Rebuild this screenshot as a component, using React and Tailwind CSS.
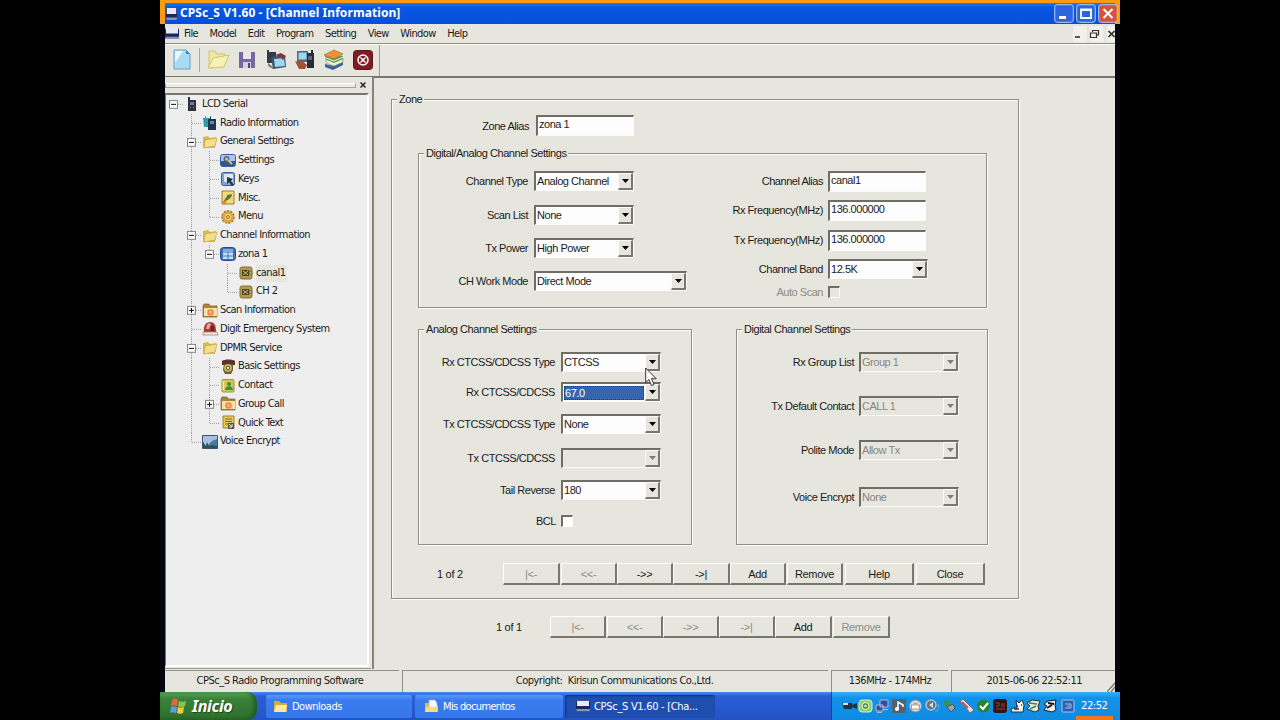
import clsx from "clsx";

const UI = "font-['DejaVu_Sans_Condensed','Noto_Sans',sans-serif]";

// cells: one letter per guide column. I = line, T = branch, L = last branch, _ = empty
const TREE = [
  { cells: "E", box: "-", icon: "radio", label: "LCD Serial" },
  { cells: "_T", icon: "radios", label: "Radio Information" },
  { cells: "_T", box: "-", icon: "folder", label: "General Settings" },
  { cells: "_IT", icon: "settings", label: "Settings" },
  { cells: "_IT", icon: "keys", label: "Keys" },
  { cells: "_IT", icon: "misc", label: "Misc." },
  { cells: "_IL", icon: "menu", label: "Menu" },
  { cells: "_T", box: "-", icon: "folder", label: "Channel Information" },
  { cells: "_IL", box: "-", icon: "zone", label: "zona 1" },
  { cells: "_I_T", icon: "channel", label: "canal1", selected: true },
  { cells: "_I_L", icon: "channel", label: "CH 2" },
  { cells: "_T", box: "+", icon: "scan", label: "Scan Information" },
  { cells: "_T", icon: "alarm", label: "Digit Emergency System" },
  { cells: "_T", box: "-", icon: "folder", label: "DPMR Service" },
  { cells: "_IT", icon: "phone", label: "Basic Settings" },
  { cells: "_IT", icon: "contact", label: "Contact" },
  { cells: "_IT", box: "+", icon: "scan", label: "Group Call" },
  { cells: "_IL", icon: "note", label: "Quick Text" },
  { cells: "_L", icon: "voice", label: "Voice Encrypt" },
];

function GuideCell({ kind, box }) {
  return (
    <svg className="h-full w-[18px] shrink-0 overflow-visible" viewBox="0 0 18 19" preserveAspectRatio="none" shapeRendering="crispEdges">
      <g stroke="#9a9a9a" strokeDasharray="1 1">
        {(kind === "I" || kind === "T") && <path d="M8.500 0V19" />}
        {kind === "L" && <path d="M8.500 0V10" />}
        {(kind === "T" || kind === "L" || kind === "E") && <path d="M9 9.500H18" />}
      </g>
      {box && (
        <>
          <rect x="4.500" y="5.500" width="8" height="8" fill="#fafafa" stroke="#858585" />
          <path d={box === "+" ? "M6 9.500H11M8.500 7V12" : "M6 9.500H11"} stroke="#111" />
        </>
      )}
    </svg>
  );
}

function TreeIcon({ name }) {
  return (
    <svg className="h-4 w-[18px] shrink-0" viewBox="0 0 18 16">
      {name === "radio" && (
        <>
          <path d="M5 1h2v3h6v11H5z" fill="#30313f" />
          <path d="M7 6h4v3H7z" fill="#7476a3" />
          <path d="M7 11h1v1H7zm3 0h1v1h-1z" fill="#8a8ba0" />
        </>
      )}
      {name === "radios" && (
        <>
          <path d="M2 3h2V1h1v2h4V1h1v11H3z" fill="#2b9fb0" />
          <path d="M7 4h2V2h1v2h5v11H7z" fill="#263447" />
          <path d="M9 6h4v3H9z" fill="#4a95bd" />
        </>
      )}
      {name === "folder" && (
        <>
          <path d="M2 3l5-1 2 2 6-1v3l-1 8H2z" fill="#d9b94d" />
          <path d="M4 6l12-2-2 8-11 2z" fill="#f5e08a" stroke="#c9a545" strokeWidth=".7" />
        </>
      )}
      {name === "settings" && (
        <>
          <rect x="1.500" y="1.500" width="15" height="12" rx="2" fill="#a8c6ec" stroke="#3561a4" />
          <path d="M2 8h14v5H2z" fill="#35558f" />
          <circle cx="7.500" cy="6" r="2.200" fill="none" stroke="#69635d" strokeWidth="1.500" />
          <path d="M9 7l4 4" stroke="#cfbe8d" strokeWidth="2" />
        </>
      )}
      {name === "keys" && (
        <>
          <rect x="2.500" y="1.500" width="13" height="13" rx="2" fill="#7fa2d1" stroke="#3b5f99" />
          <rect x="5" y="3" width="9" height="8" rx="1" fill="#dde7f2" />
          <path d="M8 6l6 2-2 2 3 4-2 1-3-4-2 2z" fill="#25344d" />
        </>
      )}
      {name === "misc" && (
        <>
          <path d="M3 1h12v13H3z" fill="#f3db7b" stroke="#a57a2a" />
          <path d="M5 13c0-5 3-5 3-8l5-1c0 4-3 5-6 7z" fill="#597c35" />
          <path d="M3 11h4v3H3z" fill="#d98b34" />
        </>
      )}
      {name === "menu" && (
        <>
          <circle cx="9" cy="8" r="6" fill="#e2b449" stroke="#b98432" strokeWidth="1.800" strokeDasharray="2.300 1" />
          <circle cx="9" cy="8" r="4" fill="#f7d87b" stroke="#c99a3c" />
          <circle cx="9" cy="8" r="1.500" fill="#f7e3a4" stroke="#966221" />
        </>
      )}
      {name === "zone" && (
        <>
          <rect x="1.500" y="1.500" width="15" height="13" rx="3" fill="#3d71bc" stroke="#264c8c" />
          <path d="M4 3h10v3H4z" fill="#82aae1" />
          <path d="M4 6.500h4.500v3H4zM9.500 6.500H14v3H9.500zM4 10.500h4.500V13H4zM9.500 10.500H14V13H9.500z" fill="#cbe1f7" />
        </>
      )}
      {name === "channel" && (
        <>
          <rect x="3" y="2" width="12" height="12" rx="2" fill="#b39a4c" stroke="#85702f" />
          <path d="M5 5h7v6H5z" fill="#47462b" />
          <path d="M6 6l5 4M11 6l-5 4" stroke="#d3c278" />
          <circle cx="13.500" cy="8" r="1.500" fill="#d9be69" stroke="#4d4430" strokeWidth=".7" />
        </>
      )}
      {name === "scan" && (
        <>
          <path d="M2 3l1-2h5l1 2h7v11H2z" fill="#a8843d" stroke="#776027" strokeWidth=".7" />
          <path d="M3 5h13v8H3z" fill="#f8dfab" />
          <circle cx="9.500" cy="9.500" r="3.200" fill="#ed843b" />
          <circle cx="9.500" cy="9.500" r="1.200" fill="none" stroke="#fbe0ad" />
        </>
      )}
      {name === "alarm" && (
        <>
          <path d="M3 11C2 5 5 1 9 1c5 0 6 4 6 10z" fill="#a83835" />
          <path d="M6 4c1-2 3-2 4-1L8 8H5z" fill="#e6a9a4" />
          <path d="M10 5h3v5h-3z" fill="#582d30" />
          <path d="M2 11h14l1 3H2z" fill="#eee7df" stroke="#b96b65" strokeWidth=".7" />
        </>
      )}
      {name === "phone" && (
        <>
          <path d="M3 2c2-2 11-2 13 0v4h-4l-1-1H7L6 6H3z" fill="#5c332d" />
          <path d="M5 5h9v6l-2 4H6l-2-4z" fill="#6b5f33" />
          <circle cx="9" cy="9" r="3.800" fill="#e0c45d" />
          <circle cx="9" cy="9" r="1.800" fill="#fff4c9" stroke="#4d4125" />
        </>
      )}
      {name === "contact" && (
        <>
          <rect x="3" y="1.500" width="12" height="12.500" rx="1" fill="#d3c456" stroke="#a1943b" />
          <circle cx="10" cy="6" r="2" fill="#418c30" />
          <path d="M6 12c0-5 8-5 8 0z" fill="#418c30" />
          <path d="M4.500 3v9" stroke="#f3edaa" strokeWidth="1.500" />
        </>
      )}
      {name === "note" && (
        <>
          <path d="M4 1h11v12H4z" fill="#e4c959" stroke="#9f8431" />
          <path d="M6 4h7M6 6.500h7M6 9h3" stroke="#7a682b" />
          <path d="M9 8h6v6H9z" fill="#555044" />
          <path d="M10 9l3 3m0-3v3h-3" stroke="#fff" />
        </>
      )}
      {name === "voice" && (
        <>
          <path d="M1.500 1.500h15v13h-15z" fill="#a9c1de" stroke="#3c5577" />
          <path d="M8 10l3-3 5-2v9H6z" fill="#4a78a8" />
          <path d="M2 8l3 4 1-4 2 4 3-1 5 1v2H2z" fill="#2d5550" />
        </>
      )}
    </svg>
  );
}

function TreeRow({ cells, box, icon, label, selected }) {
  const last = cells.length - 1;
  return (
    <div className="flex h-[18.75px] items-center">
      {cells.split("").map((c, i) => (
        <GuideCell key={i} kind={c} box={i === last ? box : null} />
      ))}
      <TreeIcon name={icon} />
      <span className={clsx("ml-px h-[17px] pr-[2px] leading-[16px] tracking-[-0.58px] whitespace-nowrap", selected && "bg-[#e6e6de]")}>{label}</span>
    </div>
  );
}

function AppIcon({ className }) {
  return (
    <svg className={className} viewBox="0 0 14 14" preserveAspectRatio="none">
      <rect x="0" y="1" width="14" height="12" rx="2" fill="#1c2658" />
      <path d="M1 1h12v6H1z" fill="#e8e9f2" />
      <path d="M0 10.500h14v1.500l-1 1H1z" fill="#8792bd" />
    </svg>
  );
}

function TitleBar() {
  return (
    <div className="flex h-[21px] items-center bg-linear-to-b from-[#2a77f0] via-[#0857e6] via-20% to-[#064fd8]">
      <AppIcon className="ml-px h-3.5 w-[11px]" />
      <span className="ml-[3px] pb-px font-['Noto_Sans',sans-serif] text-[12px] leading-none font-bold tracking-[0.08px] whitespace-nowrap text-white">
        CPSc_S V1.60 - [Channel Information]
      </span>
      <div className="mr-[-3px] ml-auto flex gap-[2px]">
        {["min", "max", "close"].map((b) => (
          <svg key={b} className="h-[19px] w-5" viewBox="0 0 20 19">
            <rect x=".7" y=".7" width="18.600" height="17.600" rx="2.500" fill={b === "close" ? "#d6533a" : "#2b67dc"} stroke="#b9cdf5" />
            {b === "min" && <path d="M5 13.500h7" stroke="#fff" strokeWidth="3" />}
            {b === "max" && <path d="M5 5.500h10V14H5zM5 6h10" fill="none" stroke="#fff" strokeWidth="1.800" />}
            {b === "close" && <path d="M5.500 5l9 9m0-9l-9 9" stroke="#fff" strokeWidth="2" />}
          </svg>
        ))}
      </div>
    </div>
  );
}

function MenuBar() {
  return (
    <div className="flex h-[20px] items-center border-b border-[#8f8f86] leading-none">
      <AppIcon className="h-[13px] w-3.5" />
      <div className="ml-[5px] flex gap-[11.600px] pb-px tracking-[-0.62px] whitespace-nowrap">
        {["File", "Model", "Edit", "Program", "Setting", "View", "Window", "Help"].map((m) => (
          <span key={m}>{m}</span>
        ))}
      </div>
      <svg className="ml-auto h-4 w-[42px]" viewBox="0 0 42 16">
        <path d="M0 0h13.500v16H0zM17 0h13.500v16H17zM34 0h8v16h-8z" fill="#f1f0ea" />
        <path d="M2 11h5" stroke="#333" strokeWidth="1.600" />
        <path d="M19.500 6V4.500h6V9H24M17.500 7h6v4.500h-6z" fill="none" stroke="#333" strokeWidth="1.200" />
        <path d="M35.500 5l6 6m0-6l-6 6" stroke="#333" strokeWidth="1.700" />
      </svg>
    </div>
  );
}

function Toolbar() {
  return (
    <div className="flex h-[33px] items-center border-b border-[#77776f] shadow-[inset_0_1px_#fff]">
      <div className="flex h-[31px] w-[215px] items-center border-r border-[#9c9c93]">
        <svg className="ml-[8px] h-6 w-[18px]" viewBox="0 0 18 24">
          <path d="M1 2h12l4 4v15H1z" fill="#a9dbf4" stroke="#6aa0c4" />
          <path d="M2 3h8L2 15z" fill="#e8f8fe" />
          <path d="M13 2v4h4z" fill="#3d8fc4" />
        </svg>
        <div className="ml-[8px] h-6 w-px bg-[#aaaaa0]" />
        <svg className="ml-[7px] h-6 w-[23px]" viewBox="0 0 23 24">
          <path d="M2 3h6l2 3h8v5L6 20H2z" fill="#eee7a5" stroke="#cec579" />
          <path d="M1 20L6 10l16-3-5 12z" fill="#f7f1b5" stroke="#cfc36f" />
        </svg>
        <svg className="ml-[8px] h-5 w-[18px]" viewBox="0 0 18 20">
          <path d="M1 2h16v16H1z" fill="#75699f" />
          <path d="M5 2h8v7H5z" fill="#e8e6ef" />
          <path d="M5 12h8v6H5z" fill="#d3d0df" />
          <path d="M10 13h2v5h-2z" fill="#514679" />
        </svg>
        <svg className="ml-[10px] h-[22px] w-[21px]" viewBox="0 0 21 22">
          <path d="M1 1h2v2h7v11H1z" fill="#34394b" />
          <path d="M5 8l14-2 1 12-13 2z" fill="#3f556c" />
          <path d="M8 10l10-1 1 8-10 1z" fill="#9bd7ed" />
          <path d="M9 6l6-2 5 3-3 4-3-3z" fill="#7b3a35" />
          <path d="M2 14l5 4v2l-5-3z" fill="#777f84" />
        </svg>
        <svg className="ml-[7px] h-[22px] w-[21px]" viewBox="0 0 21 22">
          <path d="M3 2h11v11H3z" fill="#51697e" />
          <path d="M4.500 3.500h8v7h-8z" fill="#9bd7ed" />
          <path d="M13 4h4V1h2v3h1v15h-7z" fill="#282c39" />
          <path d="M14 7h4v4h-4z" fill="#59667d" />
          <path d="M1 12l4 1 2-2 6 5-2 4H5z" fill="#a64f38" />
        </svg>
        <svg className="ml-[8px] h-[22px] w-[22px]" viewBox="0 0 22 22">
          <path d="M2 15v3l8 3 10-5v-3l-9 4z" fill="#37639a" />
          <path d="M3 11v3l8 3 9-4v-3z" fill="#f5edd1" stroke="#8a8d6c" strokeWidth=".7" />
          <path d="M2 7v3l9 4 9-4V7z" fill="#50a05a" />
          <path d="M2 8.500l9 3.500 9-4" fill="none" stroke="#f4f4e4" />
          <path d="M1 6l10-5 9 4-9 5z" fill="#e9933a" stroke="#b96b24" strokeWidth=".7" />
        </svg>
        <svg className="ml-[8px] h-[20px] w-[20px]" viewBox="0 0 20 20">
          <rect x=".5" y=".5" width="19" height="19" rx="3" fill="#811b21" stroke="#5a1519" />
          <circle cx="10" cy="10" r="5" fill="none" stroke="#fff" strokeWidth="1.500" />
          <path d="M7.500 7.500l5 5m0-5l-5 5" stroke="#fff" strokeWidth="1.500" />
        </svg>
      </div>
    </div>
  );
}

function Sidebar() {
  return (
    <aside className="flex w-[209px] shrink-0 flex-col border-r-2 border-[#85857c]">
      <div className="flex h-4 items-center">
        <div className="mt-px h-[5px] w-[191px] border border-[#a0a097] border-t-white bg-[#eeeee8]" />
        <svg className="ml-[4px] h-1.5 w-1.5" viewBox="0 0 6 6">
          <path d="M.5 .5l5 5m0-5l-5 5" stroke="#222" strokeWidth="1.500" />
        </svg>
      </div>
      <div className="h-[574px] w-[204px] border-t-2 border-r-2 border-b-2 border-l border-t-[#77776f] border-r-white border-b-white border-l-[#77776f] bg-[#eeeeee]">
        <div className="-ml-px">
          {TREE.map((n, i) => (
            <TreeRow key={i} {...n} />
          ))}
        </div>
      </div>
      <div className="mt-px h-px w-[206px] bg-[#99998f]" />
    </aside>
  );
}

function Group({ title, className, children }) {
  return (
    <section className={clsx("relative border border-[#8f8f87] shadow-[1px_1px_#fbfbf7,inset_1px_1px_#fbfbf7]", className)}>
      <span className="absolute -top-[8px] left-[5px] bg-[#e6e6de] px-[2px] leading-[14px] whitespace-nowrap">{title}</span>
      {children}
    </section>
  );
}

const SUNKEN = "border-t-2 border-l-2 border-r border-b border-t-[#6e6e67] border-l-[#6e6e67] border-r-[#fbfbf7] border-b-[#fbfbf7]";

function Select({ value, disabled, active, wide }) {
  return (
    <div className={clsx("flex h-[20px] items-center", SUNKEN, wide ? "w-[153px]" : "w-[100px]", disabled ? "bg-[#e6e6de] text-[#86867e]" : "bg-[#fdfdfd]")}>
      <span
        className={clsx(
          "flex-1 overflow-hidden whitespace-nowrap",
          active ? "m-px h-[14px] border border-dotted border-[#1c3c74] bg-[#3565ad] leading-[12px] text-white" : "pl-px leading-[15px]"
        )}
      >
        {value}
      </span>
      <div className="flex h-full w-[15px] items-center justify-center border-t border-r-2 border-b-2 border-l border-t-[#fbfbf7] border-r-[#77776f] border-b-[#77776f] border-l-[#fbfbf7] bg-[#e6e6de]">
        <svg className="h-1 w-[7px]" viewBox="0 0 7 4">
          <path d="M0 0h7L3.500 4z" fill={disabled ? "#7c7c74" : "#000"} />
        </svg>
      </div>
    </div>
  );
}

function Input({ value, className }) {
  return <div className={clsx("h-[21px] w-[98px] pl-px leading-[15px]", SUNKEN, "bg-[#fdfdfd]", className)}>{value}</div>;
}

function Check({ disabled }) {
  return <div className={clsx("h-3 w-3", SUNKEN, disabled ? "bg-[#e6e6de]" : "bg-[#fdfdfd]")} />;
}

function Field({ label, labelWidth, className, muted, children }) {
  return (
    <div className={clsx("flex h-5 items-center", className)}>
      <span className={clsx("shrink-0 text-right whitespace-nowrap", labelWidth, muted && "text-[#8c8c84]")}>{label}</span>
      {children}
    </div>
  );
}

function Button({ children, disabled, className }) {
  return (
    <button
      className={clsx(
        "flex h-[22px] items-center justify-center border-t border-r-2 border-b-2 border-l border-t-[#fdfdfa] border-r-[#77776f] border-b-[#77776f] border-l-[#fdfdfa] whitespace-pre",
        disabled && "text-[#8c8c84]",
        className
      )}
    >
      {children}
    </button>
  );
}

function ChannelForm() {
  return (
    <main className="flex-1 border-t border-[#77776f] pt-[21px] pl-[17px] font-['Liberation_Sans',Arial,sans-serif] text-[11px] leading-[14px] tracking-[-0.46px] text-[#1b1b1b]">
      <Group title="Zone" className="h-[500px] w-[628px] pt-[15px]">
        <Field label="Zone Alias" labelWidth="w-[137px]" className="h-[21px]">
          <Input value="zona 1" className="ml-[7px]" />
        </Field>

        <Group title="Digital/Analog Channel Settings" className="mt-[17px] ml-[26px] flex h-[155px] w-[569px] pt-[17px]">
          <div className="w-[302px]">
            <Field label="Channel Type" labelWidth="w-[109px] mr-1.5">
              <Select value="Analog Channel" />
            </Field>
            <Field label="Scan List" labelWidth="w-[109px] mr-1.5" className="mt-[14px]">
              <Select value="None" />
            </Field>
            <Field label="Tx Power" labelWidth="w-[109px] mr-1.5" className="mt-[13px]">
              <Select value="High Power" />
            </Field>
            <Field label="CH Work Mode" labelWidth="w-[109px] mr-1.5" className="mt-[13px]">
              <Select value="Direct Mode" wide />
            </Field>
          </div>
          <div>
            <Field label="Channel Alias" labelWidth="w-[102px] mr-[5px]">
              <Input value="canal1" />
            </Field>
            <Field label="Rx Frequency(MHz)" labelWidth="w-[102px] mr-[5px]" className="mt-[9px]">
              <Input value="136.000000" />
            </Field>
            <Field label="Tx Frequency(MHz)" labelWidth="w-[102px] mr-[5px]" className="mt-[10px]">
              <Input value="136.000000" />
            </Field>
            <Field label="Channel Band" labelWidth="w-[102px] mr-[5px]" className="mt-[9px]">
              <Select value="12.5K" />
            </Field>
            <Field label="Auto Scan" labelWidth="w-[102px] mr-[5px]" className="mt-[3px]" muted>
              <Check disabled />
            </Field>
          </div>
        </Group>

        <div className="mt-[21px] ml-[26px] flex gap-[44px]">
          <Group title="Analog Channel Settings" className="h-[216px] w-[274px] pt-[22px]">
            <Field label="Rx CTCSS/CDCSS Type" labelWidth="w-[136px] mr-1.5">
              <Select value="CTCSS" />
            </Field>
            <Field label="Rx CTCSS/CDCSS" labelWidth="w-[136px] mr-1.5" className="mt-[10px]">
              <Select value="67.0" active />
            </Field>
            <Field label="Tx CTCSS/CDCSS Type" labelWidth="w-[136px] mr-1.5" className="mt-[12px]">
              <Select value="None" />
            </Field>
            <Field label="Tx CTCSS/CDCSS" labelWidth="w-[136px] mr-1.5" className="mt-[14px]">
              <Select value="" disabled />
            </Field>
            <Field label="Tail Reverse" labelWidth="w-[136px] mr-1.5" className="mt-[12px]">
              <Select value="180" />
            </Field>
            <Field label="BCL" labelWidth="w-[137px] mr-[5px]" className="mt-[11px]">
              <Check />
            </Field>
          </Group>

          <Group title="Digital Channel Settings" className="h-[216px] w-[252px] pt-[22px]">
            <Field label="Rx Group List" labelWidth="w-[117px] mr-[5px]">
              <Select value="Group 1" disabled />
            </Field>
            <Field label="Tx Default Contact" labelWidth="w-[117px] mr-[5px]" className="mt-[24px]">
              <Select value="CALL 1" disabled />
            </Field>
            <Field label="Polite Mode" labelWidth="w-[117px] mr-[5px]" className="mt-[24px]">
              <Select value="Allow Tx" disabled />
            </Field>
            <Field label="Voice Encrypt" labelWidth="w-[117px] mr-[5px]" className="mt-[27px]">
              <Select value="None" disabled />
            </Field>
          </Group>
        </div>

        <div className="mt-[18px] ml-[45px] flex items-center tracking-[-0.3px]">
          <span className="w-[66px]">1 of 2</span>
          <Button disabled className="w-[57px]">{"|<-"}</Button>
          <Button disabled className="ml-px w-[56px]">{"<<-"}</Button>
          <Button className="w-[56px]">{"->>"}</Button>
          <Button className="w-[57px]">{"->|"}</Button>
          <Button className="w-[56px]">Add</Button>
          <Button className="ml-px w-[56px]">Remove</Button>
          <Button className="ml-[2px] w-[69px]">Help</Button>
          <Button className="ml-[2px] w-[69px]">Close</Button>
        </div>
      </Group>

      <div className="mt-[17px] ml-[105px] flex items-center tracking-[-0.3px]">
        <span className="w-[54px]">1 of 1</span>
        <Button disabled className="w-[56px]">{"|<-"}</Button>
        <Button disabled className="ml-px w-[56px]">{"<<-"}</Button>
        <Button disabled className="w-[56px]">{"->>"}</Button>
        <Button disabled className="w-[56px]">{"->|"}</Button>
        <Button className="w-[57px]">Add</Button>
        <Button disabled className="ml-px w-[57px]">Remove</Button>
      </div>
    </main>
  );
}

function StatusBar() {
  const cell = "flex items-center justify-center border-t border-l border-[#8f8f87] whitespace-pre";
  return (
    <footer className="flex h-[23px] gap-[3px] pt-px">
      <div className={clsx(cell, "w-[234px] border-l-transparent pr-[5px]")}>CPSc_S Radio Programming Software</div>
      <div className={clsx(cell, "w-[426px] pr-[2px]")}>{"Copyright:  Kirisun Communications Co.,Ltd."}</div>
      <div className={clsx(cell, "w-[117px]")}>136MHz - 174MHz</div>
      <div className={clsx(cell, "flex-1")}>
        <span className="ml-auto">2015-06-06 22:52:11</span>
        <svg className="ml-[25px] h-[10px] w-[8px] self-end" viewBox="0 0 8 10">
          <path d="M0 10L8 1M4 10l4-5" stroke="#77776f" strokeWidth="1.300" />
        </svg>
      </div>
    </footer>
  );
}

function TaskButton({ icon, children, active, className }) {
  return (
    <div className={clsx("flex h-[23px] items-center rounded-[2px] leading-none whitespace-nowrap text-white", active ? "bg-[#1e4fae] shadow-[inset_1px_1px_2px_#12367f]" : "bg-linear-to-b from-[#5b9af8] via-[#3b7df0] via-20% to-[#3577ec]", className)}>
      {icon}
      {children}
    </div>
  );
}

function TrayIcons() {
  return (
    <svg className="h-[18px] w-[238px] shrink-0" viewBox="0 0 238 18">
      <path d="M2 6h10v6H4zM12 8l5-2v6l-5-2z" fill="#25323a" />
      <path d="M3 6h5v2H3z" fill="#d9e3e5" />
      <rect x="19" y="3" width="13" height="12" rx="3" fill="#8ece63" stroke="#d9f0cc" />
      <circle cx="25.500" cy="9" r="3.500" fill="#4b9138" stroke="#f4fff0" />
      <circle cx="25.500" cy="9" r="1.200" fill="#f4fff0" />
      <path d="M36 8h7v6h-7zM40 3h8v7h-8z" fill="#345098" stroke="#aeb8d9" />
      <path d="M37 15.500h5M43 12.500h5" fill="none" stroke="#aeb8d9" />
      <rect x="52" y="2" width="14" height="14" fill="#52636b" />
      <path d="M58 12V5l5 3v2" fill="none" stroke="#fff" strokeWidth="1.500" />
      <circle cx="57" cy="12" r="2" fill="#fff" />
      <circle cx="75.500" cy="9" r="6" fill="#d9dcda" stroke="#87939a" />
      <path d="M71.500 8h8v4h-8z" fill="#fff" stroke="#8f7656" strokeWidth=".7" />
      <path d="M73.500 6.500h4" stroke="#bfa274" strokeWidth="1.500" />
      <circle cx="91" cy="8" r="5" fill="#5f7388" stroke="#b4bfc8" strokeWidth="1.500" />
      <path d="M93 5v6l-4-3z" fill="#d9dee0" />
      <path d="M98 7c2 3 1 6-3 8" fill="none" stroke="#79a6cf" />
      <path d="M105 2l5 3 2 4-4 2-4-3z" fill="#3b944b" />
      <path d="M107 10l6-3 2 4-4 4z" fill="#9ea6a8" stroke="#46545a" />
      <path d="M120 4l3-2 11 11-4 3z" fill="#e5dfdf" stroke="#74666c" />
      <path d="M122 5l6 6" stroke="#b55554" strokeWidth="2" />
      <circle cx="143.500" cy="9" r="6.500" fill="#28852f" />
      <path d="M140 9l3 3 5-6" fill="none" stroke="#fff" strokeWidth="2" />
      <rect x="153" y="2" width="14" height="14" rx="3" fill="#2b1718" />
      <path d="M156 6h3v3h-3m6-3v4m2-4v4M156 12h9" fill="none" stroke="#ae3931" />
      <path d="M176 3l3 3 3-3 2 5-1 7h-12l1-4h5z" fill="#f5f5ef" stroke="#272e37" />
      <path d="M177 9h1m3-1h1m-8 4h5" stroke="#272e37" strokeWidth="1.500" />
      <path d="M187 6l5-3 8 1-2 5 1 4-4 2-8-3 3-3z" fill="#e5e9df" stroke="#26332b" />
      <path d="M189 6l8 1M190 12l6-3" stroke="#4f7a5c" strokeWidth="1.500" />
      <path d="M204 7l4-3 8-1-1 5 1 5-4 2-8-2 3-4z" fill="#eef0ec" stroke="#171b20" />
      <path d="M208 6l6 1M207 11l5-3" stroke="#171b20" strokeWidth="2" />
      <rect x="222" y="3" width="12" height="12" rx="1" fill="#345fa8" stroke="#a5c5e9" />
      <path d="M225 7h6v4h-6m2-2h3" fill="none" stroke="#9cc2ef" />
    </svg>
  );
}

function Taskbar() {
  return (
    <div className="flex h-[28px] bg-linear-to-b from-[#4788f4] via-[#2a5ed8] via-15% to-[#2453c4]">
      <div className="flex w-[97px] items-center rounded-r-[10px] bg-linear-to-b from-[#5ca45b] via-[#398238] via-25% to-[#2d702c] pl-[10px] shadow-[inset_-3px_-1px_4px_#205a20]">
        <svg className="h-[17px] w-[17px]" viewBox="0 0 17 17">
          <path d="M2 2c3-2 4-1 6 0L7 8C5 7 3 7 1 8z" fill="#e5673b" />
          <path d="M9 3c3 1 4 1 7 0l-1 5c-3 2-5 1-7 0z" fill="#86c454" />
          <path d="M1 9c2-1 4-1 6 0l-1 6c-2-1-4-1-6 0z" fill="#6699e4" />
          <path d="M8 9c2 1 4 1 6 0l-1 6c-2 1-4 1-6 0z" fill="#f5cb45" />
        </svg>
        <span className="ml-[5px] font-['Noto_Sans',sans-serif] text-[16px] leading-none font-bold tracking-[-0.35px] text-white italic [text-shadow:1px_1px_1px_#1a461a]">
          Inicio
        </span>
      </div>
      <div className="flex items-center gap-[3px] pl-[9px]">
        <TaskButton
          className="w-[146px] pl-[7px]"
          icon={
            <svg className="mr-[4px] h-3.5 w-[15px]" viewBox="0 0 15 14">
              <path d="M1 2h5l2 2h6v9H1z" fill="#d8ac37" />
              <path d="M3 6h11l-1 7H1z" fill="#fbeaa0" />
            </svg>
          }
        >
          Downloads
        </TaskButton>
        <TaskButton
          className="w-[148px] pl-[9px] tracking-[-0.65px]"
          icon={
            <svg className="mr-[4px] h-3.5 w-[15px]" viewBox="0 0 15 14">
              <path d="M1 4h4l1 2h8v7H1z" fill="#e3ba4b" />
              <path d="M5 1h6l2 3v6H5z" fill="#f5f7fa" stroke="#9fb2c8" strokeWidth=".6" />
              <path d="M2 8h12l-1 5H1z" fill="#f8dc83" />
            </svg>
          }
        >
          Mis documentos
        </TaskButton>
        <TaskButton active className="-ml-px w-[150px] pl-[11px] tracking-[-0.3px]" icon={<AppIcon className="mr-[4px] h-3 w-3.5" />}>
          CPSc_S V1.60 - [Cha...
        </TaskButton>
      </div>
      <div className="relative ml-auto flex w-[289px] items-center border-l border-[#0f4aa8] bg-linear-to-b from-[#39b0f8] via-[#1193ea] via-20% to-[#108ae0] pl-[8px] text-white">
        <TrayIcons />
        <span className="ml-[3px] tracking-[-0.4px]">22:52</span>
        <div className="absolute right-[7px] bottom-0 h-1 w-[37px] bg-[#f0781f]" />
      </div>
    </div>
  );
}

export default function App() {
  return (
    <div className="flex h-[720px] w-[1280px] justify-center overflow-hidden bg-black">
      <div className={clsx("relative flex w-[960px] flex-col text-[11px] tracking-[-0.5px] text-[#1b1b1b]", UI)}>
        <div className="bg-linear-to-b from-[#fb9b10] from-[24px] to-[#05050f] to-[24px] px-[5px] pt-[3px]">
          <div className="flex h-[689px] flex-col bg-[#e6e6de]">
            <TitleBar />
            <MenuBar />
            <Toolbar />
            <div className="flex h-[592px]">
              <Sidebar />
              <ChannelForm />
            </div>
            <StatusBar />
          </div>
        </div>
        <Taskbar />
        {/* Mouse pointer */}
        <svg className="absolute top-[367px] left-[485px] h-[20px] w-[13px]" viewBox="0 0 13 20">
          <path d="M.7 1v14.500l3.300-3 2.400 6 2.600-1-2.500-5.800h4.700z" fill="#fff" stroke="#333" />
        </svg>
      </div>
    </div>
  );
}
